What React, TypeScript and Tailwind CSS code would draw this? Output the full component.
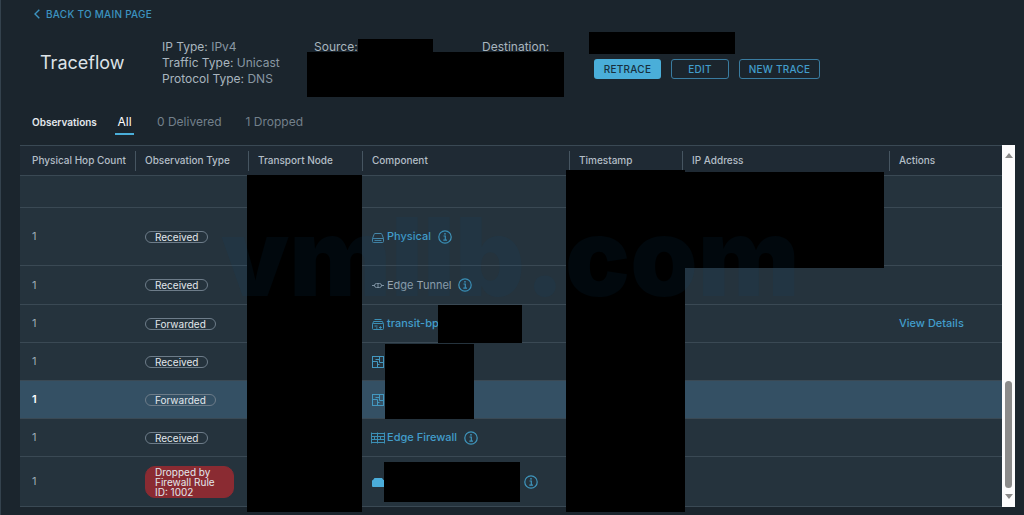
import React from 'react';
import { clsx } from 'clsx';

type Kind = 'physical' | 'tunnel' | 'router' | 'switch' | 'firewall' | 'vm';

interface Observation {
  hop: string;
  type: string;
  kind?: Kind;
  component?: string;
  link?: boolean;
  info?: boolean;
  details?: boolean;
  selected?: boolean;
  height: string;
}

const columns = [
  { label: 'Physical Hop Count', width: 'w-[115px]' },
  { label: 'Observation Type', width: 'w-[113px]' },
  { label: 'Transport Node', width: 'w-[114px]' },
  { label: 'Component', width: 'w-[207px]' },
  { label: 'Timestamp', width: 'w-[113px]' },
  { label: 'IP Address', width: 'w-[207px]' },
  { label: 'Actions', width: 'w-[113px]' }
];

const observations: Observation[] = [
  { hop: '', type: '', height: 'h-8' },
  { hop: '1', type: 'Received', kind: 'physical', component: 'Physical', link: true, info: true, height: 'h-[58px]' },
  { hop: '1', type: 'Received', kind: 'tunnel', component: 'Edge Tunnel', info: true, height: 'h-[39px]' },
  { hop: '1', type: 'Forwarded', kind: 'router', component: 'transit-bp', link: true, details: true, height: 'h-[38px]' },
  { hop: '1', type: 'Received', kind: 'switch', height: 'h-[38px]' },
  { hop: '1', type: 'Forwarded', kind: 'switch', selected: true, height: 'h-[38px]' },
  { hop: '1', type: 'Received', kind: 'firewall', component: 'Edge Firewall', link: true, info: true, height: 'h-[38px]' },
  { hop: '1', type: 'Dropped by Firewall Rule ID: 1002', kind: 'vm', info: true, height: 'h-[50px]' }
];

// Blacked out areas, relative to the table
const tableMasks = [
  'left-[227px] top-[30px] h-[337px] w-[115px]',
  'left-[546px] top-[25px] h-[342px] w-[119px]',
  'left-[664px] top-[27px] h-[96px] w-[200px]',
  'left-[418px] top-[160px] h-[38px] w-[84px]',
  'left-[365px] top-[199px] h-[75px] w-[89px]',
  'left-[364px] top-[317px] h-[40px] w-[136px]'
];

function KindIcon({ kind }: { kind: Kind }) {
  const common = {
    width: 14,
    height: 14,
    viewBox: '0 0 14 14',
    fill: 'none',
    stroke: 'currentColor',
    'aria-hidden': true
  };

  switch (kind) {
    case 'physical':
      return (
        <svg {...common} className="shrink-0 text-[#4586a8]">
          <path d="M1.5 8.5 3 4.5Q3.2 3.5 4 3.5H10Q10.8 3.5 11 4.5L12.5 8.5V11.5Q12.5 12.5 11.5 12.5H2.5Q1.5 12.5 1.5 11.5ZM1.5 8.5H12.5M3.5 10.5H10.5" />
        </svg>
      );
    case 'tunnel':
      return (
        <svg {...common} className="shrink-0 text-[#8a98a5]">
          <path d="M1 7.5H4M10 7.5H13M7 5.5V9.5" />
          <rect x="3.5" y="5.5" width="7" height="4" rx="2" />
        </svg>
      );
    case 'router':
      return (
        <svg {...common} className="shrink-0 text-[#3b8fb5]">
          <path d="M3.5 2.5H10.5M2.5 4.5H11.5" />
          <rect x="1.5" y="6.5" width="11" height="6" rx="1" />
          <path d="M1.5 7.5 2.5 4.5M12.5 7.5 11.5 4.5M3.5 9H6.5M8 10.5H10.5M9.3 9.3 10.5 10.5 9.3 11.7M5 11H6.5" />
        </svg>
      );
    case 'switch':
      return (
        <svg {...common} className="shrink-0 text-[#4398c0]">
          <rect x="1.5" y="1.5" width="11" height="11" />
          <path d="M1.5 6.5H6.5V12.5M8.5 1.5V7.5H12.5M4.5 4.5H8.5M8.5 9.5H6.5" />
        </svg>
      );
    case 'firewall':
      return (
        <svg {...common} className="shrink-0 text-[#3b8fb5]">
          <path d="M.5 1.5V12.5M13.5 1.5V12.5M.5 2.5H13.5M.5 5.5H13.5M.5 8.5H13.5M.5 11.5H13.5M6.5 1.5V12.5M3.5 5.5V8.5M9.5 5.5V8.5" />
        </svg>
      );
    case 'vm':
      return (
        <svg {...common} className="shrink-0 text-[#4badda]">
          <path fill="currentColor" stroke="none" d="M1 6Q1 5 2 5L3.5 3H11L12.5 5H14V12H2Q1 12 1 11Z" />
        </svg>
      );
  }
}

function InfoButton({ name }: { name: string }) {
  return (
    <button type="button" aria-label={name} className="text-[#3f96bd]">
      <svg width="14" height="14" viewBox="0 0 14 14" fill="none" stroke="currentColor" strokeWidth="1.2">
        <circle cx="7" cy="7" r="6.2" />
        <path d="M5.5 6H7.3V10M5.3 10.2H9" />
        <circle cx="7" cy="3.8" r=".9" fill="currentColor" stroke="none" />
      </svg>
    </button>
  );
}

function TypeBadge({ type }: { type: string }) {
  if (!type) return null;
  const dropped = type.startsWith('Dropped');
  return (
    <div className="flex items-center">
      <span
        className={clsx(
          'border px-[9px] text-[10px] leading-[10px] text-[#e3e8ec]',
          dropped ? 'w-[89px] rounded-[10px] border-[#8a2b32] bg-[#8a2b32]' : 'rounded-full border-[#6d7c89]'
        )}
      >
        {type}
      </span>
    </div>
  );
}

function ObservationRow({ item }: { item: Observation }) {
  return (
    <tr
      className={clsx(
        'border-b border-[#3a4954]',
        item.height,
        item.selected ? 'bg-[#345064]' : 'bg-[#25333d]'
      )}
    >
      <td className={clsx('pl-3 text-[11px]', item.selected ? 'font-semibold text-white' : 'text-[#9eabb5]')}>
        {item.hop}
      </td>
      <td className="pl-[10px]">
        <TypeBadge type={item.type} />
      </td>
      <td />
      <td className="pl-[9px]">
        {item.kind && (
          <div className="flex items-center gap-[2px] text-[11px]">
            <KindIcon kind={item.kind} />
            {item.component &&
              (item.link ? (
                <a href="#component" className="font-medium text-[#429dcb]">
                  {item.component}
                </a>
              ) : (
                <span className="text-[#96a3af]">{item.component}</span>
              ))}
            {item.info && (
              <span className={clsx('flex', item.component ? 'ml-[5px]' : 'ml-[137px]')}>
                <InfoButton name="Info" />
              </span>
            )}
          </div>
        )}
      </td>
      <td />
      <td />
      <td className="pl-[10px] text-[11px]">
        {item.details && (
          <a href="#details" className="font-medium text-[#429dcb]">
            View Details
          </a>
        )}
      </td>
    </tr>
  );
}

function Header() {
  return (
    <header className="relative flex h-[69px] items-start pl-5">
      <h1 className="mt-[15px] w-[122px] text-[18px] leading-6 text-[#dde3e8]">Traceflow</h1>
      <div className="w-[152px] pt-[3px] text-[12px] leading-4 text-[#8997a3]">
        <p><span className="text-[#a9b5bf]">IP Type:</span> IPv4</p>
        <p><span className="text-[#a9b5bf]">Traffic Type:</span> Unicast</p>
        <p><span className="text-[#a9b5bf]">Protocol Type:</span> DNS</p>
      </div>
      <p className="w-[168px] pt-[3px] text-[12px] leading-4 text-[#a9b5bf]">Source:</p>
      <p className="w-[112px] pt-[3px] text-[12px] leading-4 text-[#a9b5bf]">Destination:</p>
      <div className="mt-[23px] flex gap-[10px] text-[10px] font-medium tracking-wide">
        <button type="button" className="h-5 w-[67px] rounded-[3px] bg-[#4aaed9] text-[#17303e]">RETRACE</button>
        <button type="button" className="h-5 w-[58px] rounded-[3px] border border-[#3a7ca0] text-[#429dcb]">EDIT</button>
        <button type="button" className="h-5 w-[81px] rounded-[3px] border border-[#3a7ca0] text-[#429dcb]">NEW TRACE</button>
      </div>

      <div className="absolute left-[338px] top-[3px] h-[14px] w-[75px] bg-black" />
      <div className="absolute left-[287px] top-[16px] h-[45px] w-[257px] bg-black" />
      <div className="absolute left-[569px] top-[-4px] h-[22px] w-[146px] bg-black" />
    </header>
  );
}

export default function App() {
  return (
    <div className="relative min-h-screen overflow-hidden border-l border-[#34424d] bg-[#1b252d] pl-[19px] pr-[9px] font-['Inter',sans-serif]">
      <nav className="flex h-9 items-center pl-[14px]">
        <a href="#main" className="mb-2 flex items-center gap-[6px] text-[10px] font-medium tracking-wide text-[#3c93c0]">
          <svg width="6" height="10" viewBox="0 0 6 10" fill="none" stroke="currentColor" strokeWidth="1.4" aria-hidden>
            <path d="M5.3 .8 1 5 5.3 9.2" />
          </svg>
          BACK TO MAIN PAGE
        </a>
      </nav>

      <Header />

      <div className="flex h-10 items-start pl-3 pt-2 text-[12px] text-[#73808b]">
        <h2 className="w-[83px] text-[10px] font-semibold leading-[18px] text-[#e3e8ec]">Observations</h2>
        <div role="tablist" className="flex items-start leading-[18px]">
          <button role="tab" aria-selected="true" className="mr-[23px] w-[19px] border-b-2 border-[#4aaed9] pb-[2px] text-white">All</button>
          <button role="tab" aria-selected="false" className="mr-[24px]">0 Delivered</button>
          <button role="tab" aria-selected="false">1 Dropped</button>
        </div>
      </div>

      <main className="flex">
        <div className="relative flex-1">
          <table className="w-full table-fixed border-collapse text-left">
            <thead>
              <tr className="h-[30px] border-y border-[#3a4954] bg-[#1f2a34]">
                {columns.map((col, i) => (
                  <th key={col.label} className={clsx('p-0 text-[10px] font-medium text-[#b3bec7]', col.width)}>
                    <div
                      className={clsx(
                        'flex h-5 items-center whitespace-nowrap',
                        i === 0 ? 'pl-3' : 'border-l border-[#465561] pl-[9px]'
                      )}
                    >
                      {col.label}
                    </div>
                  </th>
                ))}
              </tr>
            </thead>
            <tbody>
              {observations.map((item, i) => (
                <ObservationRow key={i} item={item} />
              ))}
            </tbody>
          </table>
          {tableMasks.map(mask => (
            <div key={mask} className={clsx('absolute bg-black', mask)} />
          ))}
        </div>

        {/* Scrollbar */}
        <div className="flex w-[13px] flex-col items-center justify-between bg-[#fcfcfd] py-2">
          <svg width="8" height="5" viewBox="0 0 8 5" fill="#8b8b8b" aria-hidden><path d="M0 5 4 0 8 5Z" /></svg>
          <div className="mb-[6px] mt-auto h-[107px] w-[7px] rounded-full bg-[#8b8b8b]" />
          <svg width="8" height="5" viewBox="0 0 8 5" fill="#8b8b8b" aria-hidden><path d="M0 0H8L4 5Z" /></svg>
        </div>
      </main>

      <div className="pointer-events-none absolute left-[220px] top-[197px] text-[108px] font-black leading-[120px] text-[#0a4c84]/10">
        vmllb.com
      </div>
    </div>
  );
}
